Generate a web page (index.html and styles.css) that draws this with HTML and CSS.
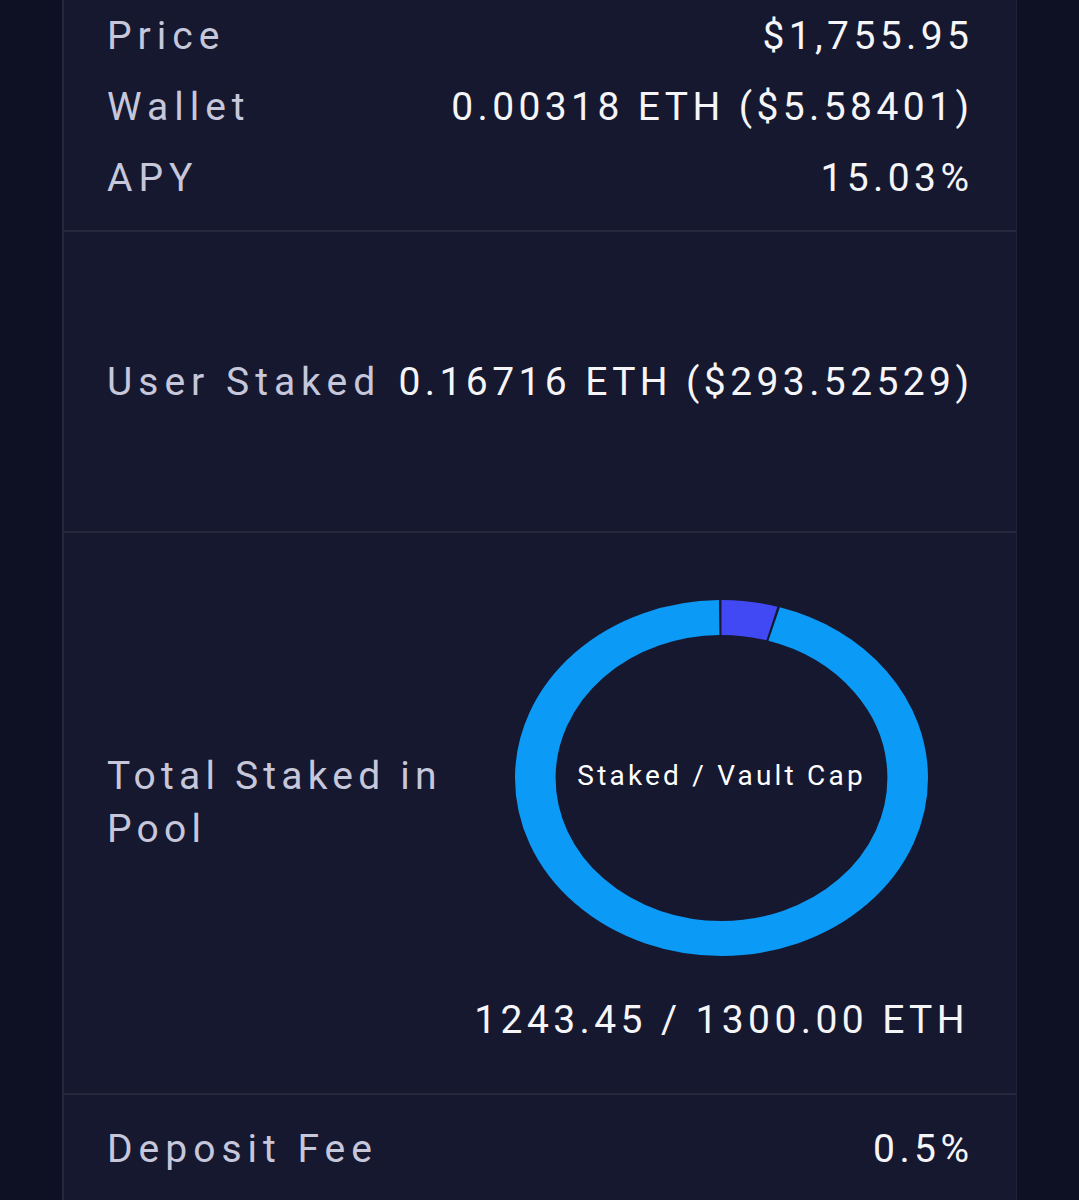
FILE: index.html
```html
<!DOCTYPE html>
<html lang="en">
<head>
  <meta charset="UTF-8" />
  <meta name="viewport" content="width=device-width, initial-scale=1.0" />
  <title>Vault</title>
  <link rel="stylesheet" href="styles.css">
</head>
<body>
  <div class="card">
    <div class="section stats">
      <div class="row">
        <span class="label">Price</span>
        <span class="value">$1,755.95</span>
      </div>
      <div class="row">
        <span class="label">Wallet</span>
        <span class="value">0.00318 ETH ($5.58401)</span>
      </div>
      <div class="row">
        <span class="label">APY</span>
        <span class="value">15.03%</span>
      </div>
    </div>

    <div class="section user">
      <div class="row">
        <span class="label">User Staked</span>
        <span class="value">0.16716 ETH ($293.52529)</span>
      </div>
    </div>

    <div class="section pool">
      <div class="pool-label label">Total Staked in Pool</div>
      <div class="pool-chart">
        <div class="donut">
          <svg viewBox="0 0 356 356" preserveAspectRatio="none">
            <g transform="rotate(-90 178 178)">
              <circle class="ring cap" cx="178" cy="178" r="160.5" stroke-dasharray="0 46 960 2000" />
              <circle class="ring staked" cx="178" cy="178" r="160.5" stroke-dasharray="44 2000" />
            </g>
          </svg>
          <span class="donut-text">Staked / Vault Cap</span>
        </div>
        <div class="value caption">1243.45 / 1300.00 ETH</div>
      </div>
    </div>

    <div class="section fee">
      <div class="row">
        <span class="label">Deposit Fee</span>
        <span class="value">0.5%</span>
      </div>
    </div>
  </div>
</body>
</html>
```

FILE: styles.css
```css
body {
  margin: 0;
  background-color: #0e1124;
  font-family: Roboto, 'Liberation Sans', sans-serif;
  color: #f5f5f8;
}
.card {
  margin-left: 62px;
  width: 952px;
  min-height: 1200px;
  background: #161830;
  border-left: 2px solid #25283e;
  border-right: 1px solid #1f2238;
}
.section {
  padding: 0 47px 0 43px;
  border-bottom: 2px solid #26283d;
}
.row {
  display: flex;
  justify-content: space-between;
  align-items: center;
  height: 71px;
  font-size: 39px;
}
.label {
  color: #c6c7da;
  letter-spacing: 6px;
}
.value {
  color: #f5f5f8;
  letter-spacing: 4.4px;
  margin-right: -4.4px;
  white-space: nowrap;
}
.stats {
  padding-bottom: 17px;
}
.user {
  height: 299px;
  display: flex;
  flex-direction: column;
  justify-content: center;
}
.pool {
  display: flex;
  height: 562px;
  padding-top: 67px;
  box-sizing: border-box;
}
.pool-label {
  width: 369px;
  font-size: 39px;
  line-height: 53px;
  padding-top: 150px;
  letter-spacing: 5.2px;
}
.pool-chart {
  flex: 1;
  display: flex;
  flex-direction: column;
  align-items: center;
  padding-left: 4px;
}
.donut {
  display: grid;
  place-items: center;
}
.donut svg {
  grid-area: 1 / 1;
  width: 413px;
  height: 356px;
  display: block;
}
.ring {
  fill: none;
  stroke-width: 35;
}
.ring.cap {
  stroke: #0b9af6;
}
.ring.staked {
  stroke: #4149f4;
}
.donut-text {
  grid-area: 1 / 1;
  font-size: 28px;
  letter-spacing: 3.2px;
  margin-bottom: 6px;
  color: #ffffff;
}
.caption {
  font-size: 39px;
  line-height: 53px;
  margin-top: 38px;
  margin-right: 0;
}
.fee {
  padding-top: 18px;
  border-bottom: none;
}
```
